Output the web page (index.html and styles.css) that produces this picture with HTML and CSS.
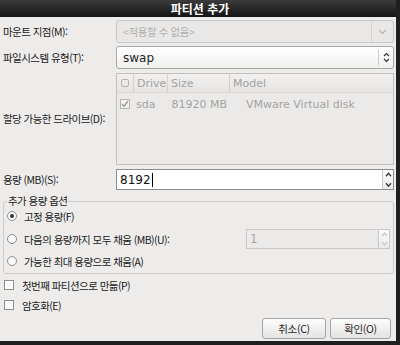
FILE: index.html
```html
<!DOCTYPE html>
<html lang="ko">
<head>
    <meta charset="UTF-8">
    <title>파티션 추가</title>
    <link rel="stylesheet" href="styles.css">
</head>
<body>
    <div class="window">
        <div class="titlebar">파티션 추가</div>

        <div class="content">
            <div class="form-grid">
                <label class="label">마운트 지점(M):</label>
                <div class="combo disabled">
                    <span class="combo-text">&lt;적용할 수 없음&gt;</span>
                    <span class="combo-btn">
                        <svg width="9" height="6" viewBox="0 0 9 6"><path d="M1 1 L4.5 4.5 L8 1" fill="none" stroke="#b5b4b3" stroke-width="1.2"/></svg>
                    </span>
                </div>

                <label class="label">파일시스템 유형(T):</label>
                <div class="combo">
                    <span class="combo-text">swap</span>
                    <span class="combo-btn updown">
                        <svg width="7" height="11" viewBox="0 0 7 11"><path d="M1 4 L3.5 1.5 L6 4 M1 7 L3.5 9.5 L6 7" fill="none" stroke="#333" stroke-width="1.2"/></svg>
                    </span>
                </div>

                <label class="label label-drive">할당 가능한 드라이브(D):</label>
                <div class="tree">
                    <div class="tree-row tree-head">
                        <span class="col col-check"><span class="mini-radio"></span></span>
                        <span class="col col-drive">Drive</span>
                        <span class="col col-size">Size</span>
                        <span class="col col-model">Model</span>
                    </div>
                    <div class="tree-row">
                        <span class="col col-check"><span class="mini-check">
                            <svg width="8" height="8" viewBox="0 0 8 8"><path d="M1 4 L3 6.5 L7 1" fill="none" stroke="#9a9a9a" stroke-width="1.3"/></svg>
                        </span></span>
                        <span class="col col-drive">sda</span>
                        <span class="col col-size cell-size">81920 MB</span>
                        <span class="col col-model cell-model">VMware Virtual disk</span>
                    </div>
                </div>

                <label class="label">용량 (MB)(S):</label>
                <div class="spin">
                    <span class="spin-text">8192<span class="caret"></span></span>
                    <span class="spin-btns">
                        <svg width="7" height="5" viewBox="0 0 7 5"><path d="M1 4 L3.5 1 L6 4" fill="none" stroke="#333" stroke-width="1.2"/></svg>
                        <svg width="7" height="5" viewBox="0 0 7 5"><path d="M1 1 L3.5 4 L6 1" fill="none" stroke="#333" stroke-width="1.2"/></svg>
                    </span>
                </div>
            </div>

            <div class="frame">
                <span class="frame-title">추가 용량 옵션</span>
                <div class="option">
                    <span class="radio checked"></span>
                    <span>고정 용량(F)</span>
                </div>
                <div class="option option-fill">
                    <span class="radio"></span>
                    <span class="option-text">다음의 용량까지 모두 채움 (MB)(U):</span>
                    <div class="spin small disabled">
                        <span class="spin-text">1</span>
                        <span class="spin-btns">
                            <svg width="7" height="5" viewBox="0 0 7 5"><path d="M1 4 L3.5 1 L6 4" fill="none" stroke="#bbb" stroke-width="1.1"/></svg>
                            <svg width="7" height="5" viewBox="0 0 7 5"><path d="M1 1 L3.5 4 L6 1" fill="none" stroke="#bbb" stroke-width="1.1"/></svg>
                        </span>
                    </div>
                </div>
                <div class="option">
                    <span class="radio"></span>
                    <span>가능한 최대 용량으로 채움(A)</span>
                </div>
            </div>

            <div class="checks">
                <div class="option">
                    <span class="checkbox"></span>
                    <span>첫번째 파티션으로 만듦(P)</span>
                </div>
                <div class="option">
                    <span class="checkbox"></span>
                    <span>암호화(E)</span>
                </div>
            </div>

            <div class="buttons">
                <button class="btn btn-cancel">취소(C)</button>
                <button class="btn btn-ok">확인(O)</button>
            </div>
        </div>
    </div>
</body>
</html>
```

FILE: styles.css
```css
* {
    margin: 0;
    padding: 0;
    box-sizing: border-box;
}

body {
    width: 400px;
    height: 345px;
    overflow: hidden;
    background: #1c1c1c;
    font-family: "DejaVu Sans", "Noto Sans CJK KR", sans-serif;
    font-size: 11px;
    color: #1e1e1e;
}

.window {
    width: 400px;
    height: 345px;
    background: #edeceb;
    border-right: 4px solid #1f1f1f;
    border-bottom: 4px solid #1f1f1f;
    display: flex;
    flex-direction: column;
}

.titlebar {
    height: 17px;
    background: linear-gradient(#3b3b3b, #141414);
    color: #fff;
    font-family: "Noto Sans CJK KR", sans-serif;
    font-weight: bold;
    font-size: 12px;
    line-height: 17px;
    text-align: center;
    padding-left: 4px;
}

.content {
    flex: 1;
    padding: 3px 2px 0 3px;
    display: flex;
    flex-direction: column;
}

.form-grid {
    display: grid;
    grid-template-columns: 113px 1fr;
    row-gap: 3px;
    align-items: center;
}

.label,
.option,
.frame-title {
    font-family: "Noto Sans CJK KR", "DejaVu Sans", sans-serif;
    font-size: 10.5px;
    letter-spacing: -0.55px;
    white-space: nowrap;
    color: #1a1a1a;
}

/* combo boxes */
.combo {
    height: 23px;
    border: 1px solid #a8a7a6;
    border-radius: 3px;
    background: linear-gradient(#ffffff, #f1f0ef);
    display: flex;
    align-items: center;
}

.combo.disabled {
    background: #e9e8e7;
    border-color: #c9c8c7;
    color: #b1b0af;
}

.combo-text {
    flex: 1;
    padding-left: 6px;
    font-size: 12px;
}

.combo.disabled .combo-text {
    font-family: "Noto Sans CJK KR", sans-serif;
    font-size: 10.5px;
    letter-spacing: -0.4px;
}

.combo-btn {
    width: 22px;
    height: 100%;
    border-left: 1px solid #d5d4d3;
    display: flex;
    align-items: center;
    justify-content: center;
}

.combo-btn.updown {
    width: 15px;
    height: 15px;
    border-left: 1px solid #c9c8c7;
}

/* drive tree */
.label-drive {
    align-self: end;
    margin-bottom: 39px;
}

.tree {
    height: 92px;
    margin-top: 1px;
    border: 1px solid #c2c1c0;
    background: #ebeae9;
    color: #a3a2a1;
}

.tree-row {
    display: flex;
    align-items: center;
    height: 20px;
}

.tree-head {
    height: 19px;
    background: linear-gradient(#f1f0ef, #e6e5e4);
    border-bottom: 1px solid #d8d7d6;
    margin-bottom: 1px;
}

.col {
    height: 100%;
    display: flex;
    align-items: center;
    padding-left: 3px;
    white-space: nowrap;
}

.tree-head .col + .col {
    border-left: 1px solid #d2d1d0;
}

.col-check {
    width: 16px;
    justify-content: center;
    padding-left: 0;
}

.col-drive {
    width: 34px;
}

.col-size {
    width: 62px;
}

.cell-size {
    justify-content: flex-end;
    padding-right: 2px;
}

.cell-model {
    padding-left: 17px;
}

.mini-radio {
    width: 8px;
    height: 8px;
    border: 1px solid #b5b4b3;
    border-radius: 2px;
}

.mini-check {
    width: 10px;
    height: 10px;
    border: 1px solid #b5b4b3;
    background: #f3f2f1;
    display: flex;
    align-items: center;
    justify-content: center;
}

/* spin buttons */
.spin {
    height: 21px;
    margin-top: 1px;
    border: 1px solid #8e8d8c;
    background: #fff;
    display: flex;
    align-items: stretch;
}

.spin-text {
    flex: 1;
    padding-left: 3px;
    display: flex;
    align-items: center;
    font-family: "DejaVu Sans", sans-serif;
    font-size: 12px;
    letter-spacing: 0;
    color: #111;
}

.caret {
    width: 1px;
    height: 14px;
    background: #000;
    margin-left: 1px;
}

.spin-btns {
    width: 11px;
    display: flex;
    flex-direction: column;
    border-left: 1px solid #c9c8c7;
    background: linear-gradient(#fafafa, #eaeaea);
}

.spin-btns svg {
    flex: 1;
    margin: 0 auto;
}

.spin.small {
    width: 144px;
    height: 20px;
    margin: 0 0 0 auto;
}

.spin.disabled {
    background: #ebeae9;
    border-color: #c9c8c7;
}

.spin.disabled .spin-text {
    color: #a9a8a7;
}

/* size options frame */
.frame {
    position: relative;
    margin-top: 11px;
    height: 73px;
    border: 1px solid #cdcccb;
    border-radius: 3px;
    padding: 5px 3px 0 3px;
    display: flex;
    flex-direction: column;
}

.frame-title {
    position: absolute;
    top: -8px;
    left: 3px;
    padding: 0 1px;
    background: #edeceb;
    line-height: 14px;
}

.frame .option {
    height: 18px;
}

.frame .option-fill {
    height: 20px;
    margin: 4px 0 3px;
}

.option {
    display: flex;
    align-items: center;
    gap: 7px;
    height: 16px;
}

.radio {
    width: 10px;
    height: 10px;
    flex: none;
    border: 1px solid #8f8e8d;
    border-radius: 50%;
    background: #fbfbfb;
    position: relative;
}

.radio.checked::after {
    content: '';
    position: absolute;
    left: 2px;
    top: 2px;
    width: 4px;
    height: 4px;
    border-radius: 50%;
    background: #333;
}

.checks {
    margin-top: 3px;
    display: flex;
    flex-direction: column;
    gap: 4px;
    padding-left: 1px;
}

.checks .option {
    gap: 8px;
}

.checkbox {
    width: 10px;
    height: 10px;
    flex: none;
    border: 1px solid #8f8e8d;
    background: #fbfbfb;
}

/* dialog buttons */
.buttons {
    margin-top: 5px;
    display: flex;
    justify-content: flex-end;
    gap: 4px;
    padding-right: 3px;
}

.btn {
    height: 21px;
    border: 1px solid #a5a4a3;
    border-radius: 3px;
    background: linear-gradient(#fdfdfd, #e4e3e2);
    font-family: "Noto Sans CJK KR", "DejaVu Sans", sans-serif;
    font-size: 10.5px;
    letter-spacing: -0.3px;
    color: #1e1e1e;
}

.btn-cancel {
    width: 64px;
}

.btn-ok {
    width: 61px;
}
```
